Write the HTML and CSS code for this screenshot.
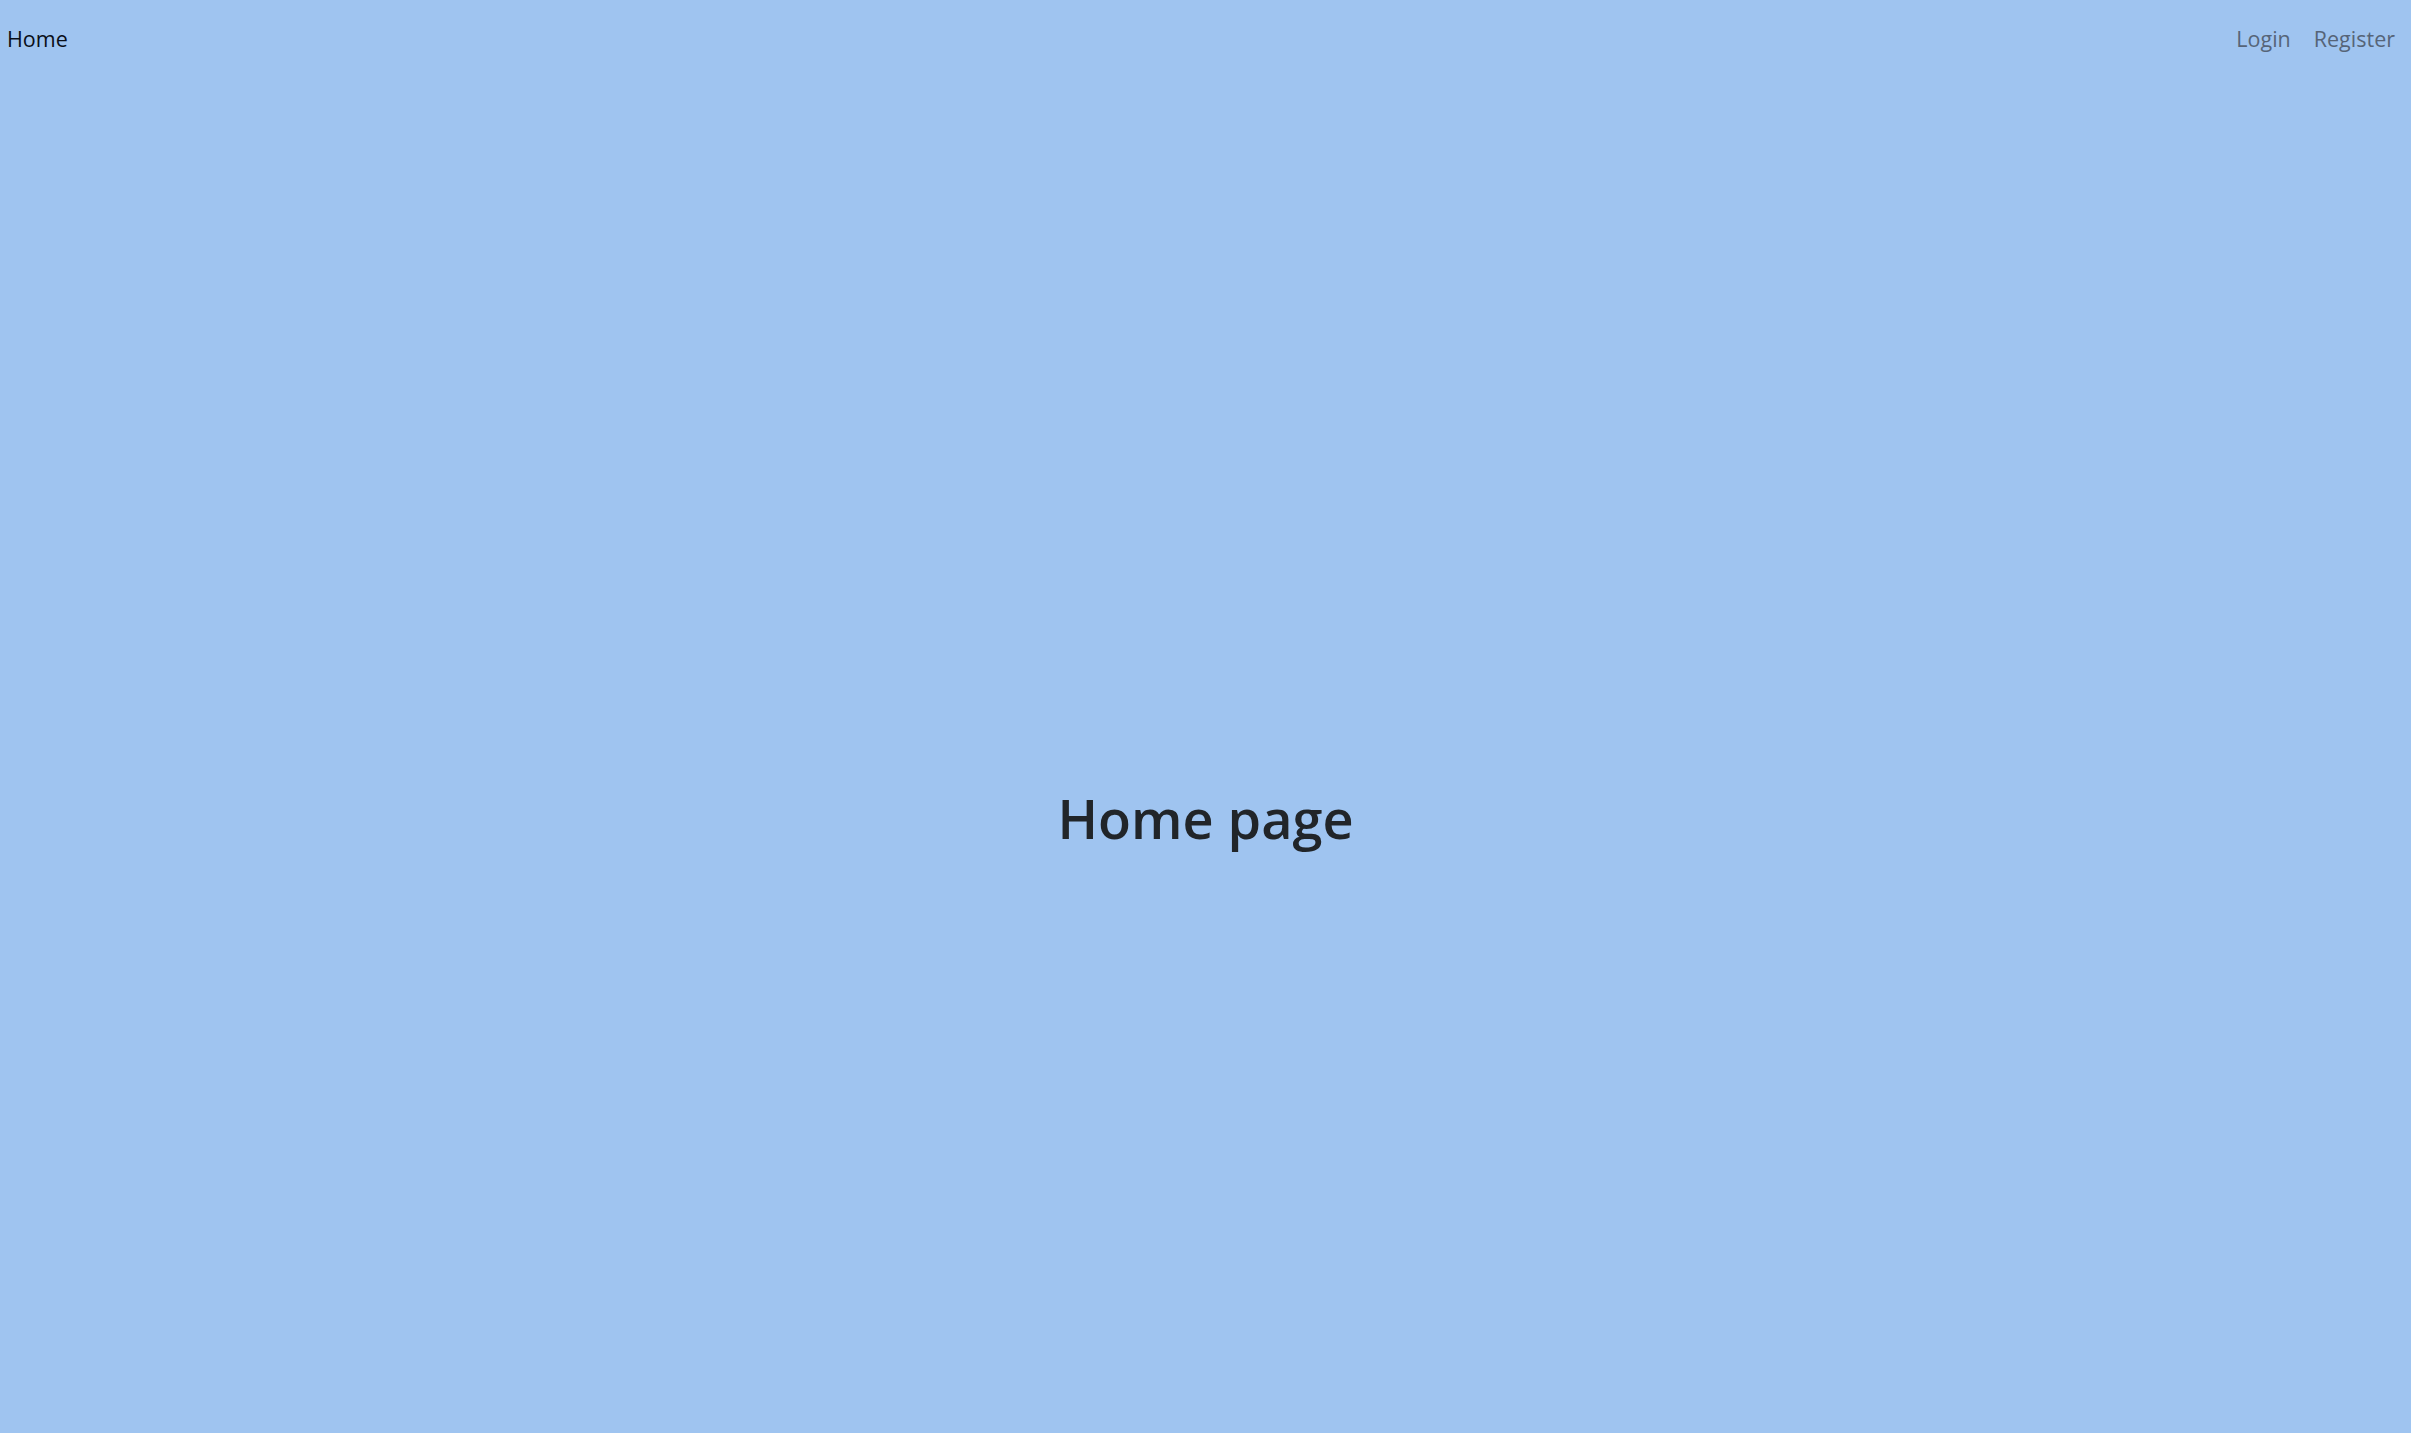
FILE: index.html
```html
<!DOCTYPE html>
<html lang="en">
<head>
<meta charset="utf-8">
<title>Home page</title>
<link rel="stylesheet" href="styles.css">
</head>
<body>
<nav class="navbar">
  <a class="nav-brand" href="#">Home</a>
  <div class="nav-right">
    <a class="nav-link" href="#">Login</a>
    <a class="nav-link" href="#">Register</a>
  </div>
</nav>
<main class="hero">
  <h1 class="hero-title">Home page</h1>
</main>
</body>
</html>
```

FILE: styles.css
```css
html, body {
  margin: 0;
  padding: 0;
  height: 100%;
}
body {
  background: #9fc4f0;
  font-family: "Open Sans", "Noto Sans", sans-serif;
  color: #212529;
}
.navbar {
  display: flex;
  justify-content: space-between;
  align-items: center;
  height: 76px;
  padding: 0 16px 0 7px;
}
.nav-brand {
  font-size: 21.5px;
  color: #0a0f18;
  text-decoration: none;
}
.nav-right {
  display: flex;
  gap: 23px;
}
.nav-link {
  font-size: 21.5px;
  color: #566478;
  text-decoration: none;
}
.hero {
  display: flex;
  justify-content: center;
  padding-top: 710px;
}
.hero-title {
  margin: 0;
  font-size: 54px;
  font-weight: 600;
  line-height: 1.2;
}
```
